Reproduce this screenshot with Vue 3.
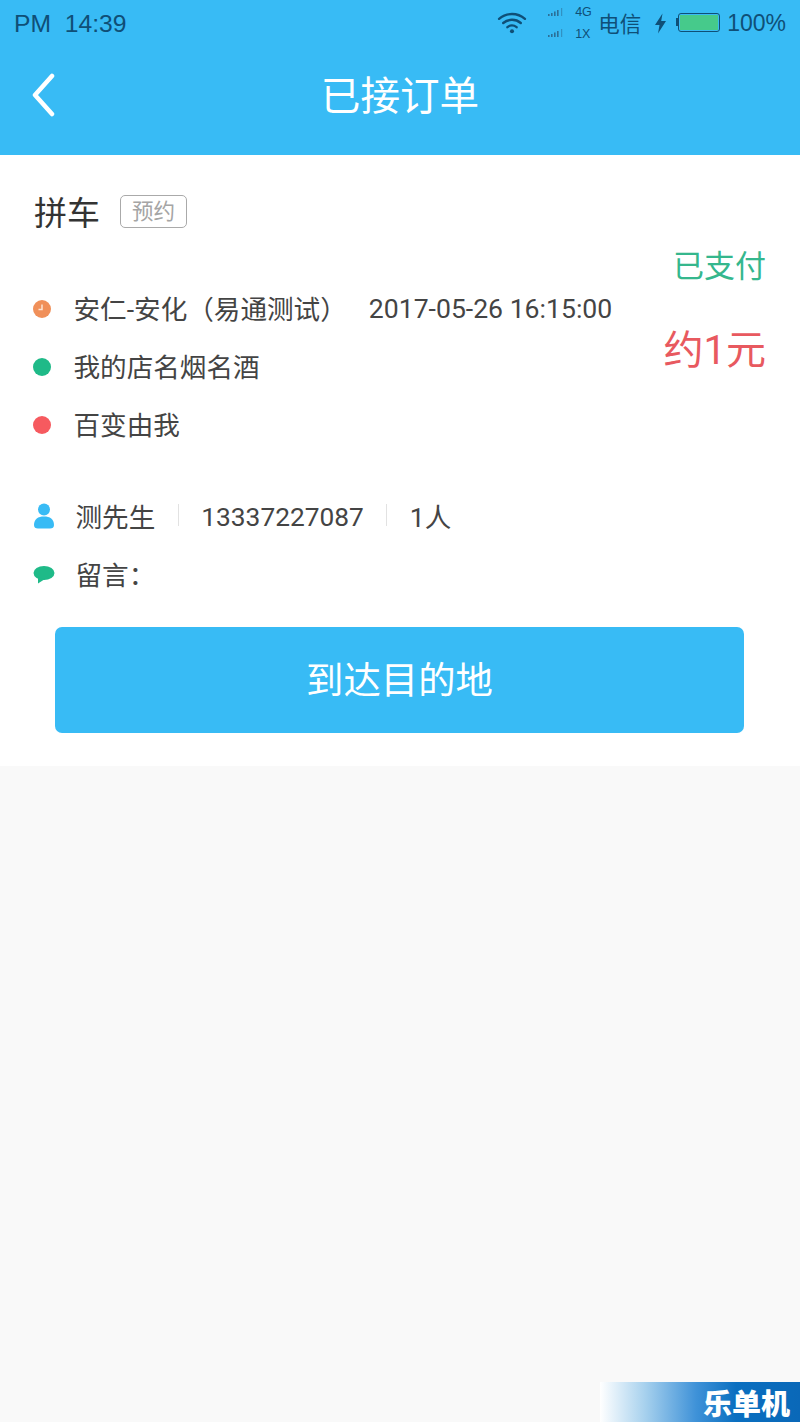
<script setup>
const stops = [
  { name: "安仁-安化（易通测试）", extra: "2017-05-26 16:15:00", type: "clock" },
  { name: "我的店名烟名酒", type: "start" },
  { name: "百变由我", type: "end" },
];
</script>

<template>
  <div class="page">
    <header class="top">
      <div class="status">
        <span class="time">PM&nbsp;&nbsp;14:39</span>
        <div class="status-right">
          <svg class="wifi" width="30" height="24" viewBox="0 0 32 26">
            <g fill="none" stroke="#0f4f77" stroke-width="2.6" stroke-linecap="round">
              <path d="M2 8.5C10 1.5 22 1.5 30 8.5" />
              <path d="M6.5 13C12 8.4 20 8.4 25.5 13" />
              <path d="M11 17.5C14 15.2 18 15.2 21 17.5" />
            </g>
            <circle cx="16" cy="22" r="2.2" fill="#0f4f77" />
          </svg>
          <div class="signals">
            <svg v-for="i in 2" :key="i" width="18" height="10" viewBox="0 0 18 10">
              <g fill="#2b6f97">
                <rect x="1" y="7" width="1.6" height="2" />
                <rect x="4" y="6" width="1.6" height="3" />
                <rect x="7" y="4.5" width="1.6" height="4.5" />
                <rect x="10" y="3" width="1.6" height="6" />
                <rect x="14" y="1" width="1.2" height="8" opacity="0.55" />
              </g>
            </svg>
          </div>
          <div class="net">
            <span>4G</span>
            <span>1X</span>
          </div>
          <span class="carrier">电信</span>
          <svg class="bolt" width="13" height="21" viewBox="0 0 13 21">
            <path d="M8.5 0.5L1 12H5.5L4 20.5L12 8H7.2Z" fill="#0f4f77" />
          </svg>
          <div class="battery"><div class="battery-fill"></div></div>
          <span class="percent">100%</span>
        </div>
      </div>
      <div class="nav">
        <svg class="back" width="24" height="44" viewBox="0 0 24 44">
          <path d="M20 3L3 22L20 41" fill="none" stroke="#fff" stroke-width="4.5" stroke-linecap="round" stroke-linejoin="round" />
        </svg>
        <h1 class="title">已接订单</h1>
      </div>
    </header>

    <section class="card">
      <div class="kind">
        <span class="kind-name">拼车</span>
        <span class="badge">预约</span>
      </div>

      <div class="info">
        <div class="stops">
          <div v-for="s in stops" :key="s.name" class="row">
            <span class="icon">
              <svg v-if="s.type === 'clock'" width="20" height="20" viewBox="0 0 20 20">
                <circle cx="10" cy="10" r="9" fill="#f0905a" />
                <path d="M10 5.5V10.5H6.5" fill="none" stroke="#fbe3d3" stroke-width="1.5" />
              </svg>
              <span v-else class="dot" :class="s.type"></span>
            </span>
            <span class="txt">{{ s.name }}</span>
            <span v-if="s.extra" class="txt stop-time">{{ s.extra }}</span>
          </div>
        </div>
        <div class="pay">
          <span class="paid">已支付</span>
          <span class="price">约1元</span>
        </div>
      </div>

      <div class="contact">
        <div class="row">
          <span class="icon wide">
            <svg class="person" width="22" height="26" viewBox="0 0 22 26">
              <circle cx="11" cy="6.5" r="6" fill="#38bbf5" />
              <path d="M1 22C1 16 5 13.5 11 13.5S21 16 21 22C21 24.5 19.5 25.5 17 25.5H5C2.5 25.5 1 24.5 1 22Z" fill="#38bbf5" />
            </svg>
          </span>
          <span class="txt">测先生</span>
          <i class="sep"></i>
          <span class="txt phone">13337227087</span>
          <i class="sep"></i>
          <span class="txt">1人</span>
        </div>
        <div class="row">
          <span class="icon wide">
            <svg width="22" height="20" viewBox="0 0 22 20">
              <ellipse cx="11" cy="8" rx="10.5" ry="7" fill="#1fba88" />
              <path d="M5 12L5 18.5L12 14Z" fill="#1fba88" />
            </svg>
          </span>
          <span class="txt">留言：</span>
        </div>
      </div>

      <button class="action">到达目的地</button>
    </section>

    <div class="watermark"><span>乐单机</span></div>
  </div>
</template>

<style scoped>
.page {
  position: relative;
  min-height: 1422px;
  background: #f9f9f9;
  font-family: Roboto, "Noto Sans CJK SC", sans-serif;
  color: #444;
  overflow: hidden;
}
.top {
  height: 155px;
  background: #38bbf5;
  box-sizing: border-box;
}
.status {
  height: 47px;
  display: flex;
  align-items: center;
  justify-content: space-between;
  padding: 0 14px;
  color: #0f4f77;
  font-family: "Liberation Sans", "Noto Sans CJK SC", sans-serif;
}
.time {
  font-size: 24.7px;
}
.status-right {
  display: flex;
  align-items: center;
}
.wifi {
  margin: 0 20px 2px 0;
}
.signals {
  display: flex;
  flex-direction: column;
  gap: 11px;
  margin: 0 10px 2px 0;
}
.signals svg {
  display: block;
}
.net {
  display: flex;
  flex-direction: column;
  gap: 10px;
  font-size: 12.5px;
  line-height: 12px;
  width: 23px;
  margin-bottom: 2px;
}
.carrier {
  font-size: 21.5px;
  width: 43px;
  margin-bottom: 3px;
  white-space: nowrap;
}
.bolt {
  margin-left: 13px;
  margin-right: 11px;
}
.battery {
  position: relative;
  width: 42px;
  height: 19px;
  box-sizing: border-box;
  border: 1.5px solid #0f4f77;
  border-radius: 3px;
  padding: 1px;
  margin: 0 7px 2px 0;
}
.battery::before {
  content: "";
  position: absolute;
  left: -3.5px;
  top: 4px;
  width: 2px;
  height: 8px;
  background: #0f4f77;
}
.battery-fill {
  height: 100%;
  background: #46ca8b;
}
.percent {
  font-size: 23px;
}
.nav {
  height: 98px;
  display: flex;
  align-items: center;
  justify-content: center;
  position: relative;
}
.back {
  position: absolute;
  left: 32px;
  top: 26px;
}
.title {
  margin: 0 0 8px;
  font-size: 39.6px;
  font-weight: 400;
  color: #fff;
}
.card {
  height: 611px;
  box-sizing: border-box;
  padding: 0 34px;
  background: #fff;
}
.kind {
  height: 90px;
  padding-top: 21px;
  box-sizing: border-box;
  display: flex;
  align-items: center;
}
.kind-name {
  font-size: 33px;
  color: #333;
}
.badge {
  margin: 2px 0 0 20px;
  width: 67px;
  height: 33px;
  box-sizing: border-box;
  border: 1.5px solid #aaa;
  border-radius: 5px;
  color: #a5a5a5;
  font-size: 21.5px;
  line-height: 31px;
  text-align: center;
}
.info {
  display: flex;
  justify-content: space-between;
}
.stops {
  padding-top: 35px;
}
.row {
  height: 58px;
  display: flex;
  align-items: center;
  font-size: 26.6px;
  white-space: nowrap;
}
.txt {
  margin-bottom: 4px;
}
.phone {
  font-size: 26.3px;
  margin-bottom: 0;
}
.icon {
  width: 39.5px;
  flex: none;
  display: flex;
  align-items: center;
}
.icon svg {
  margin-left: -2px;
  display: block;
}
.icon.wide {
  width: 41.5px;
}
.icon.wide svg {
  margin-left: -1px;
}
.icon .person {
  margin-bottom: 3px;
}
.dot {
  width: 18px;
  height: 18px;
  margin-left: -1px;
  border-radius: 50%;
}
.dot.start {
  background: #1fba88;
}
.dot.end {
  background: #f65a5f;
}
.stop-time {
  margin-left: 22px;
  margin-bottom: 2px;
}
.pay {
  display: flex;
  flex-direction: column;
  align-items: flex-end;
}
.paid {
  font-size: 31px;
  line-height: 44px;
  color: #35b78d;
}
.price {
  margin-top: 32px;
  font-size: 40px;
  line-height: 60px;
  color: #e8595f;
}
.contact {
  margin-top: 34px;
}
.sep {
  width: 1px;
  height: 22px;
  margin: 0 22.5px 4px;
  background: #e2e2e2;
}
.action {
  display: block;
  width: 689px;
  height: 106px;
  margin: 23px 0 0 21px;
  padding: 0 0 4px;
  border: 0;
  border-radius: 7px;
  background: #38bbf5;
  color: #fff;
  font-family: inherit;
  font-size: 37.4px;
}
.watermark {
  position: absolute;
  right: 0;
  bottom: 0;
  width: 200px;
  height: 40px;
  background: linear-gradient(90deg, #ffffff 0%, #a9d2ee 22%, #3f92d8 48%, #0a6fc0 68%, #0a68b8 100%);
  display: flex;
  align-items: center;
  justify-content: flex-end;
  padding-right: 10px;
  box-sizing: border-box;
}
.watermark span {
  color: #fff;
  font-size: 29px;
  font-weight: 900;
}
</style>

<style>
body {
  background: #f9f9f9;
}
</style>
